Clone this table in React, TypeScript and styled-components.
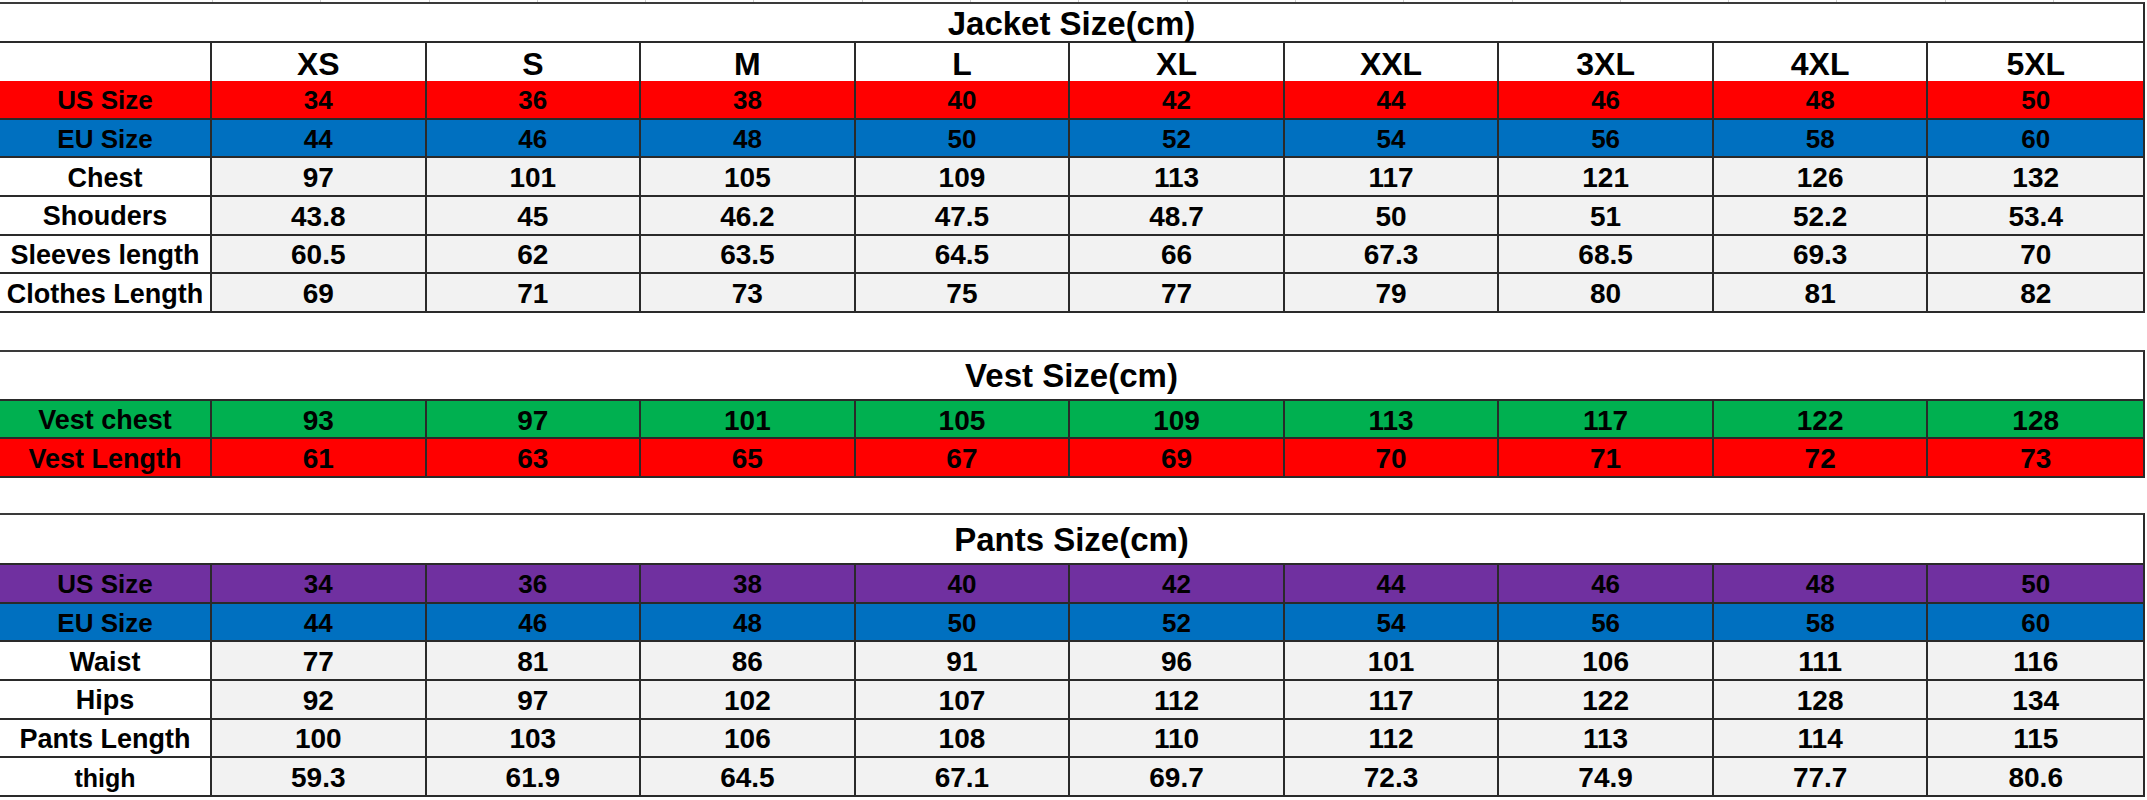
import React from 'react';
import styled, { createGlobalStyle } from 'styled-components';

const GlobalStyle = createGlobalStyle`
  html, body {
    margin: 0;
    padding: 0;
    background: #ffffff;
  }
  body {
    font-family: 'Liberation Sans', Arial, sans-serif;
    color: #000;
  }
`;

const LINE = '#2a2a2a';
const ROW_H = 38.67;

type Tone = 'white' | 'gray' | 'red' | 'blue' | 'green' | 'purple';

const toneColor: Record<Tone, string> = {
  white: '#ffffff',
  gray: '#f2f2f2',
  red: '#ff0000',
  blue: '#0070c0',
  green: '#00b050',
  purple: '#7030a0',
};

type TextKind = 'label' | 'value' | 'narrow' | 'head' | 'thigh';

const fontSize: Record<TextKind, number> = {
  label: 27,
  value: 28,
  narrow: 26,
  head: 32,
  thigh: 25,
};

const Page = styled.div`
  width: 2147px;
  height: 800px;
  overflow: hidden;
  display: flex;
  flex-direction: column;
`;

// faint spreadsheet gridlines peeking above the first table
const Strip = styled.div`
  height: 2px;
  display: flex;
`;

const StripCell = styled.div<{ $first?: boolean }>`
  width: ${p => (p.$first ? '212px' : '107.3px')};
  flex: none;
  border-left: ${p => (p.$first ? 'none' : '1px solid #cfcfcf')};
`;

const Sheet = styled.section<{ $gap: number }>`
  width: 2145px;
  margin-top: ${p => p.$gap}px;
  border-top: 2px solid #3a3a3a;
  border-right: 2px solid ${LINE};
  box-sizing: border-box;
`;

const Title = styled.div<{ $h: number }>`
  height: ${p => p.$h}px;
  box-sizing: border-box;
  border-bottom: 2px solid ${LINE};
  display: flex;
  align-items: center;
  justify-content: center;
  font-size: 33px;
  font-weight: 700;
  padding-top: 2px;
`;

const Row = styled.div<{ $h: number }>`
  display: grid;
  grid-template-columns: 212px repeat(9, 1fr);
  height: ${p => p.$h}px;
`;

const Cell = styled.div<{ $tone: Tone; $kind: TextKind; $small?: boolean; $last?: boolean }>`
  background: ${p => toneColor[p.$tone]};
  border-bottom: 2px solid ${LINE};
  border-right: ${p => (p.$last ? 'none' : `2px solid ${LINE}`)};
  box-sizing: border-box;
  display: flex;
  align-items: center;
  justify-content: center;
  padding-top: 3px;
  white-space: nowrap;
  font-weight: 700;
  font-family: ${p =>
    p.$kind === 'narrow'
      ? "'Liberation Sans Narrow', 'Liberation Sans', Arial, sans-serif"
      : "'Liberation Sans', Arial, sans-serif"};
  font-size: ${p => (p.$small ? 26 : fontSize[p.$kind])}px;
`;

interface RowSpec {
  label: string;
  values: string[];
  labelTone: Tone;
  tone: Tone;
  labelKind?: TextKind;
  kind?: TextKind;
}

const sizes = ['XS', 'S', 'M', 'L', 'XL', 'XXL', '3XL', '4XL', '5XL'];

const jacketRows: RowSpec[] = [
  { label: '', values: sizes, labelTone: 'white', tone: 'white', kind: 'head' },
  { label: 'US Size', values: ['34', '36', '38', '40', '42', '44', '46', '48', '50'], labelTone: 'red', tone: 'red', kind: 'narrow' },
  { label: 'EU Size', values: ['44', '46', '48', '50', '52', '54', '56', '58', '60'], labelTone: 'blue', tone: 'blue', kind: 'narrow' },
  { label: 'Chest', values: ['97', '101', '105', '109', '113', '117', '121', '126', '132'], labelTone: 'white', tone: 'gray' },
  { label: 'Shouders', values: ['43.8', '45', '46.2', '47.5', '48.7', '50', '51', '52.2', '53.4'], labelTone: 'white', tone: 'gray' },
  { label: 'Sleeves length', values: ['60.5', '62', '63.5', '64.5', '66', '67.3', '68.5', '69.3', '70'], labelTone: 'white', tone: 'gray' },
  { label: 'Clothes Length', values: ['69', '71', '73', '75', '77', '79', '80', '81', '82'], labelTone: 'white', tone: 'gray' },
];

const vestRows: RowSpec[] = [
  { label: 'Vest chest', values: ['93', '97', '101', '105', '109', '113', '117', '122', '128'], labelTone: 'green', tone: 'green' },
  { label: 'Vest Length', values: ['61', '63', '65', '67', '69', '70', '71', '72', '73'], labelTone: 'red', tone: 'red' },
];

const pantsRows: RowSpec[] = [
  { label: 'US Size', values: ['34', '36', '38', '40', '42', '44', '46', '48', '50'], labelTone: 'purple', tone: 'purple', kind: 'narrow' },
  { label: 'EU Size', values: ['44', '46', '48', '50', '52', '54', '56', '58', '60'], labelTone: 'blue', tone: 'blue', kind: 'narrow' },
  { label: 'Waist', values: ['77', '81', '86', '91', '96', '101', '106', '111', '116'], labelTone: 'white', tone: 'gray' },
  { label: 'Hips', values: ['92', '97', '102', '107', '112', '117', '122', '128', '134'], labelTone: 'white', tone: 'gray' },
  { label: 'Pants Length', values: ['100', '103', '106', '108', '110', '112', '113', '114', '115'], labelTone: 'white', tone: 'gray' },
  { label: 'thigh', values: ['59.3', '61.9', '64.5', '67.1', '69.7', '72.3', '74.9', '77.7', '80.6'], labelTone: 'white', tone: 'gray', labelKind: 'thigh' },
];

const SizeTable = ({
  title,
  titleHeight,
  gap,
  rows,
  rowHeights,
}: {
  title: string;
  titleHeight: number;
  gap: number;
  rows: RowSpec[];
  rowHeights?: number[];
}) => (
  <Sheet $gap={gap}>
    <Title $h={titleHeight}>{title}</Title>
    {rows.map((r, i) => (
      <Row key={r.label + i} $h={rowHeights ? rowHeights[i] : ROW_H}>
        <Cell $tone={r.labelTone} $kind={r.labelKind ?? 'label'} $small={r.kind === 'narrow'}>
          {r.label}
        </Cell>
        {r.values.map((v, j) => (
          <Cell key={j} $tone={r.tone} $kind={r.kind ?? 'value'} $last={j === r.values.length - 1}>
            {v}
          </Cell>
        ))}
      </Row>
    ))}
  </Sheet>
);

export default function App() {
  return (
    <>
      <GlobalStyle />
      <Page>
        <Strip>
          <StripCell $first />
          {Array.from({ length: 18 }).map((_, i) => (
            <StripCell key={i} />
          ))}
        </Strip>
        <SizeTable
          title="Jacket Size(cm)"
          titleHeight={39}
          gap={0}
          rows={jacketRows}
          rowHeights={[38, ROW_H, ROW_H, ROW_H, ROW_H, ROW_H, ROW_H]}
        />
        <SizeTable title="Vest Size(cm)" titleHeight={49} gap={37} rows={vestRows} rowHeights={[38.5, 38.5]} />
        <SizeTable title="Pants Size(cm)" titleHeight={50} gap={35} rows={pantsRows} />
      </Page>
    </>
  );
}
